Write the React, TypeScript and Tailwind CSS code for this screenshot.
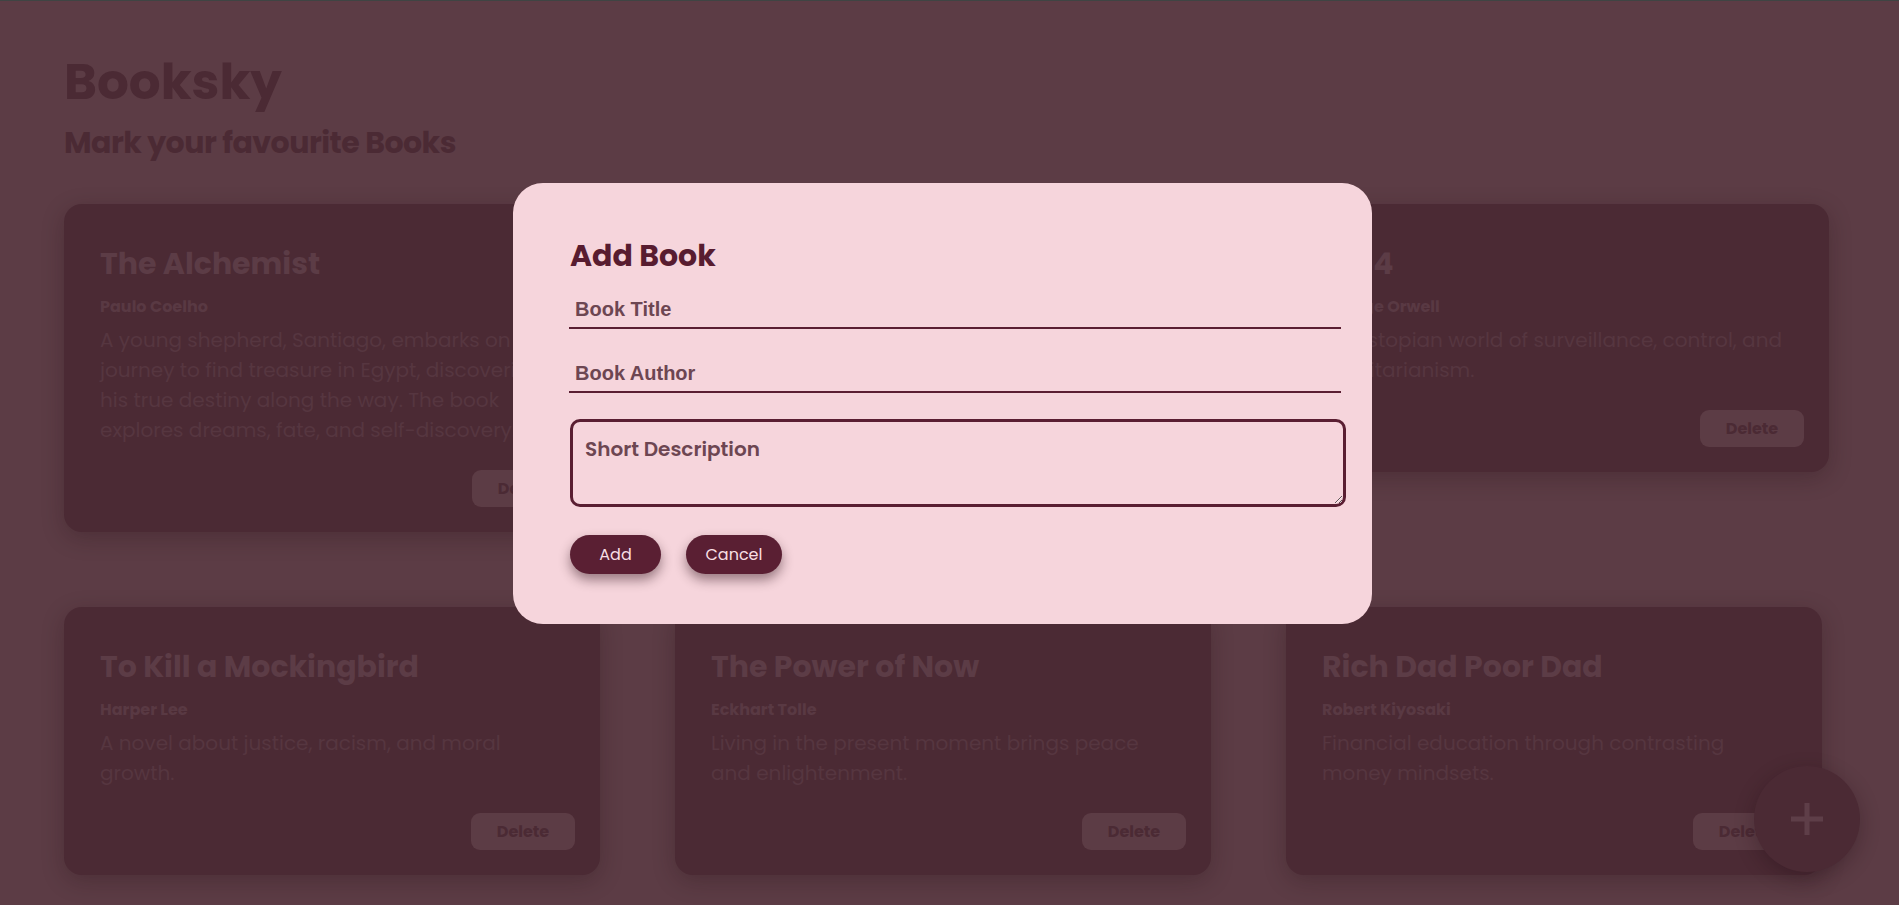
import React from "react";

type Book = { title: string; author: string; lines: string[]; w: string };

const books: Book[] = [
  {
    title: "The Alchemist",
    author: "Paulo Coelho",
    lines: [
      "A young shepherd, Santiago, embarks on a",
      "journey to find treasure in Egypt, discovering",
      "his true destiny along the way. The book",
      "explores dreams, fate, and self-discovery.",
    ],
    w: "w-[537px]",
  },
  {
    title: "Atomic Habits",
    author: "James Clear",
    lines: ["Small changes that compound into", "remarkable results."],
    w: "w-[537px]",
  },
  {
    title: "1984",
    author: "George Orwell",
    lines: ["A dystopian world of surveillance, control, and", "totalitarianism."],
    w: "w-[541px]",
  },
  {
    title: "To Kill a Mockingbird",
    author: "Harper Lee",
    lines: ["A novel about justice, racism, and moral", "growth."],
    w: "w-[536px]",
  },
  {
    title: "The Power of Now",
    author: "Eckhart Tolle",
    lines: ["Living in the present moment brings peace", "and enlightenment."],
    w: "w-[536px]",
  },
  {
    title: "Rich Dad Poor Dad",
    author: "Robert Kiyosaki",
    lines: ["Financial education through contrasting", "money mindsets."],
    w: "w-[536px]",
  },
];

function Card({ b }: { b: Book }) {
  return (
    <div
      className={`${b.w} rounded-[18px] bg-[#4b2a34] pt-[37px] pb-[25px] pl-[36px] pr-[25px] shadow-[0_6px_22px_rgba(30,10,16,0.25)]`}
    >
      <h2 className="text-[30px] leading-[45px] font-bold text-[#5c3c46]">{b.title}</h2>
      <p className="mt-[9px] text-[16px] leading-[24px] font-bold text-[#593943]">{b.author}</p>
      <p className="mt-[6px] text-[20px] leading-[30px] text-[#563640] whitespace-nowrap">
        {b.lines.map((l, i) => (
          <React.Fragment key={i}>
            {l}
            {i < b.lines.length - 1 && <br />}
          </React.Fragment>
        ))}
      </p>
      <div className="mt-[25px] flex justify-end">
        <button className="h-[37px] w-[104px] rounded-[9px] bg-[#5c3c45] text-[16px] font-bold text-[#4b2a34]">
          Delete
        </button>
      </div>
    </div>
  );
}

export default function App() {
  return (
    <div className="relative h-[905px] w-full overflow-hidden bg-[#5c3c45] font-['Poppins','Open_Sans',sans-serif]">
      <div className="h-px bg-[#3f4443]" />
      <div className="pl-[64px] pt-[50px]">
        <h1 className="text-[50px] leading-[62px] font-bold text-[#4b2a34]">Booksky</h1>
        <p className="mt-[10px] text-[30px] leading-[40px] font-bold text-[#4b2a34] tracking-[-0.5px]">
          Mark your favourite Books
        </p>
        <div className="mt-[41px] flex w-[1800px] flex-wrap items-start gap-[75px]">
          {books.map((b) => (
            <Card key={b.title} b={b} />
          ))}
        </div>
      </div>

      <button className="absolute right-[39px] bottom-[33px] flex h-[106px] w-[106px] items-center justify-center rounded-full bg-[#4b2a34] shadow-[0_6px_20px_rgba(30,10,16,0.3)]">
        <svg width="32" height="32" viewBox="0 0 32 32">
          <line x1="16" y1="0" x2="16" y2="32" stroke="#5e3e48" strokeWidth="5" />
          <line x1="0" y1="16" x2="32" y2="16" stroke="#5e3e48" strokeWidth="5" />
        </svg>
      </button>

      <div className="absolute left-[513px] top-[183px] h-[441px] w-[859px] rounded-[30px] bg-[#f6d5dc] pl-[57px] pt-[50px]">
        <h2 className="text-[30px] leading-[45px] font-bold text-[#581c30]">Add Book</h2>
        <input
          placeholder="Book Title"
          className="mt-[13px] -ml-px block h-[38px] w-[772px] border-b-2 border-[#5a1e32] bg-transparent px-[6px] font-['Liberation_Sans',Arial,sans-serif] text-[20px] font-bold text-[#5a1e32] outline-none placeholder:text-[#6d4652]"
        />
        <input
          placeholder="Book Author"
          className="mt-[26px] -ml-px block h-[38px] w-[772px] border-b-2 border-[#5a1e32] bg-transparent px-[6px] font-['Liberation_Sans',Arial,sans-serif] text-[20px] font-bold text-[#5a1e32] outline-none placeholder:text-[#6d4652]"
        />
        <textarea
          placeholder="Short Description"
          className="mt-[26px] block h-[88px] w-[776px] rounded-[10px] border-[3px] border-[#5a1e32] bg-transparent px-[12px] pt-[12px] text-[20px] leading-[30px] font-semibold text-[#5a1e32] outline-none placeholder:text-[#6d4652]"
        />
        <div className="mt-[28px] flex gap-[25px]">
          <button className="h-[39px] w-[91px] rounded-full bg-[#5a1f33] text-[16px] text-[#f8dfe4] shadow-[0_6px_12px_rgba(40,10,20,0.45)]">
            Add
          </button>
          <button className="h-[39px] w-[96px] rounded-full bg-[#5a1f33] text-[16px] text-[#f8dfe4] shadow-[0_6px_12px_rgba(40,10,20,0.45)]">
            Cancel
          </button>
        </div>
      </div>
    </div>
  );
}
